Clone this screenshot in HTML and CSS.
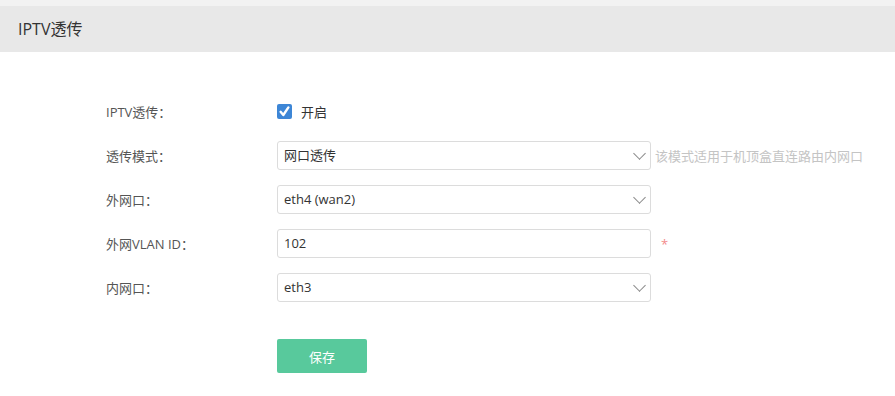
FILE: index.html
```html
<!DOCTYPE html>
<html lang="zh-CN">
<head>
  <meta charset="UTF-8" />
  <title>IPTV透传</title>
  <link rel="stylesheet" href="styles.css">
</head>
<body>
  <div class="page">
    <div class="header">IPTV透传</div>

    <div class="form">
      <div class="row">
        <label class="label">IPTV透传：</label>
        <div class="check">
          <span class="box">
            <svg width="15" height="15" viewBox="0 0 15 15"><path d="M3.6 7.8 L6.3 11 L11.4 3.4" fill="none" stroke="#fff" stroke-width="2.4" stroke-linecap="round" stroke-linejoin="round"/></svg>
          </span>
          <span>开启</span>
        </div>
      </div>

      <div class="row">
        <label class="label">透传模式：</label>
        <div class="select">网口透传<span class="arrow"></span></div>
        <span class="hint">该模式适用于机顶盒直连路由内网口</span>
      </div>

      <div class="row">
        <label class="label">外网口：</label>
        <div class="select">eth4 (wan2)<span class="arrow"></span></div>
      </div>

      <div class="row">
        <label class="label">外网VLAN ID：</label>
        <div class="select">102</div>
        <span class="star">*</span>
      </div>

      <div class="row">
        <label class="label">内网口：</label>
        <div class="select">eth3<span class="arrow"></span></div>
      </div>

      <div class="actions">
        <button class="btn">保存</button>
      </div>
    </div>
  </div>
</body>
</html>
```

FILE: styles.css
```css
body {
  margin: 0;
  font-family: "Open Sans", "Noto Sans CJK SC", sans-serif;
  background: #f2f2f2;
  color: #555;
}
.page {
  margin-top: 6px;
  background: #fff;
  height: 390px;
}
.header {
  height: 46px;
  line-height: 46px;
  background: #e8e8e8;
  padding-left: 18px;
  font-size: 16px;
  color: #333;
}
.form {
  padding: 45px 0 0 106px;
}
.row {
  display: flex;
  align-items: center;
  height: 29px;
  margin-bottom: 15px;
  font-size: 13px;
}
.label {
  width: 171px;
  color: #555;
}
.check {
  display: flex;
  align-items: center;
  gap: 9px;
  color: #333;
}
.box {
  width: 15px;
  height: 15px;
  background: #3d86d6;
  border-radius: 2px;
  display: block;
}
.box svg {
  display: block;
}
.select {
  position: relative;
  box-sizing: border-box;
  width: 374px;
  height: 29px;
  line-height: 27px;
  border: 1px solid #dcdcdc;
  border-radius: 3px;
  padding-left: 6px;
  color: #333;
}
.arrow {
  position: absolute;
  right: 6px;
  top: 7px;
  width: 8px;
  height: 8px;
  border-right: 1px solid #888;
  border-bottom: 1px solid #888;
  transform: rotate(45deg);
}
.hint {
  margin-left: 4px;
  color: #c4c4c4;
}
.star {
  margin-left: 10px;
  color: #f38b8b;
  font-size: 13px;
}
.actions {
  padding: 22px 0 0 171px;
}
.btn {
  width: 90px;
  height: 34px;
  border: none;
  border-radius: 2px;
  background: #58c99c;
  color: #fff;
  font-family: "Noto Sans CJK SC", sans-serif;
  font-size: 13px;
}
```
